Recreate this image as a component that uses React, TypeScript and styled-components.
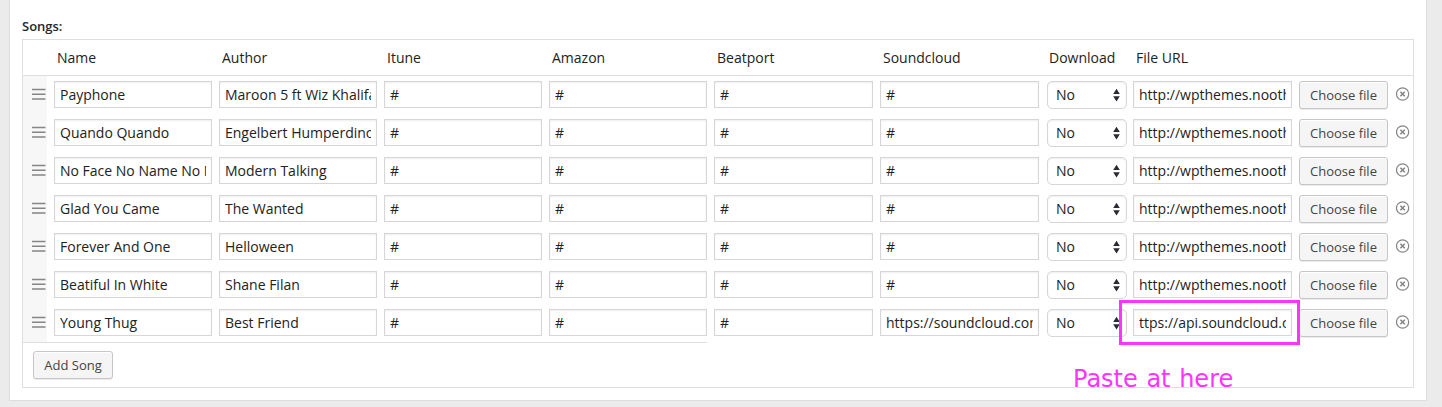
import React from 'react';
import styled, { createGlobalStyle } from 'styled-components';

const GlobalStyle = createGlobalStyle`
  * { box-sizing: border-box; }
  body {
    margin: 0;
    background: #ebebeb;
    color: #222;
    font: 14px/20px 'Open Sans', sans-serif;
    overflow: hidden;
  }
`;

const Panel = styled.main`
  position: relative;
  width: 1418px;
  height: 401px;
  margin-left: 9px;
  padding: 16px 12px 0;
  background: #fff;
  border: 1px solid #dedede;
  border-top: 0;
  box-shadow: 0 1px 1px rgba(0, 0, 0, 0.04);
`;

const Title = styled.h2`
  height: 23px;
  margin: 0;
  font-size: 13px;
  line-height: 20px;
  font-weight: 600;
  color: #23282d;
`;

const Table = styled.section`
  width: 1392px;
  height: 349px;
  border: 1px solid #dfdfdf;
`;

const columns = '31px 165px 165px 165px 165px 166px 167px 86px 166px 97px 14px';

const Header = styled.header`
  display: grid;
  grid-template-columns: ${columns};
  height: 36px;
  border-bottom: 1px solid #dfdfdf;
  line-height: 36px;
`;

const Heading = styled.div<{ $shift?: number }>`
  padding-left: ${p => p.$shift ?? 3}px;
  white-space: nowrap;
`;

const Row = styled.div`
  display: grid;
  grid-template-columns: ${columns};
  height: 38px;
`;

const Handle = styled.div`
  width: 24px;
  background: #f7f7f7;
  padding: 12px 0 0 9px;
  svg { display: block; }
`;

const Field = styled.div<{ $wide?: boolean }>`
  width: ${p => (p.$wide ? 159 : 158)}px;
  height: 27px;
  margin-top: 5px;
  padding: 0 5px;
  border: 1px solid #d6d6d6;
  box-shadow: inset 0 1px 2px rgba(0, 0, 0, 0.07);
  line-height: 26px;
`;

const Value = styled.span`
  display: block;
  overflow: hidden;
  white-space: nowrap;
`;

const Select = styled.div`
  display: flex;
  justify-content: space-between;
  width: 80px;
  height: 28px;
  margin: 5px 0 0;
  padding: 0 6px 0 8px;
  border: 1px solid #d6d6d6;
  border-radius: 5px;
  box-shadow: inset 0 1px 2px rgba(0, 0, 0, 0.07);
  line-height: 26px;
  svg { margin-top: 6px; }
`;

const Button = styled.button<{ $width: number }>`
  display: block;
  width: ${p => p.$width}px;
  height: 28px;
  margin: 0;
  padding: 0;
  border: 1px solid #c6c6c6;
  border-radius: 3px;
  background: #f5f5f5;
  box-shadow: inset 0 1px 0 #fff, 0 1px 0 rgba(0, 0, 0, 0.08);
  color: #444;
  font: 13px/26px 'Open Sans', sans-serif;
  white-space: nowrap;
`;

const ButtonCell = styled.div`
  padding-top: 5px;
`;

const Remove = styled.div`
  padding-top: 11px;
  svg { display: block; }
`;

const Footer = styled.footer`
  padding: 8px 0 0 10px;
`;

const Divider = styled.div`
  width: 684px;
  height: 1px;
  background: #dfdfdf;
`;

const Highlight = styled.div`
  position: absolute;
  left: 1109px;
  top: 300px;
  width: 181px;
  height: 45px;
  border: 3px solid #ff33ff;
`;

const Note = styled.div`
  position: absolute;
  left: 1063px;
  top: 365px;
  color: #ff33ff;
  font: 24px/28px 'DejaVu Sans', Verdana, sans-serif;
  word-spacing: 1px;
  white-space: nowrap;
`;

const HandleIcon = () => (
  <svg width="14" height="12" viewBox="0 0 14 12">
    <path d="M0 1.5h13.5M0 6.3h13.5M0 11.1h13.5" stroke="#858585" strokeWidth="1.5" fill="none" />
  </svg>
);

const ArrowsIcon = () => (
  <svg width="7" height="14" viewBox="0 0 7 14">
    <path d="M3.5 .8L6.8 6.1H.2zM3.5 13.6L6.8 8.3H.2z" fill="#2b2b33" />
  </svg>
);

const RemoveIcon = () => (
  <svg width="14" height="14" viewBox="0 0 14 14" fill="none" stroke="#858585">
    <circle cx="6.6" cy="7" r="6.1" strokeWidth="1.2" />
    <path d="M4.4 4.8l4.4 4.4M8.8 4.8L4.4 9.2" strokeWidth="1.6" />
  </svg>
);

const fileUrl = 'http://wpthemes.nooth';

const songs = [
  { name: 'Payphone', author: 'Maroon 5 ft Wiz Khalifa', cloud: '#', url: fileUrl },
  { name: 'Quando Quando', author: 'Engelbert Humperdinc', cloud: '#', url: fileUrl },
  { name: 'No Face No Name No N', author: 'Modern Talking', cloud: '#', url: fileUrl },
  { name: 'Glad You Came', author: 'The Wanted', cloud: '#', url: fileUrl },
  { name: 'Forever And One', author: 'Helloween', cloud: '#', url: fileUrl },
  { name: 'Beatiful In White', author: 'Shane Filan', cloud: '#', url: fileUrl },
  { name: 'Young Thug', author: 'Best Friend', cloud: 'https://soundcloud.com', url: 'ttps://api.soundcloud.c' },
];

const TextField = ({ value, wide }: { value: string; wide?: boolean }) => (
  <Field $wide={wide}><Value>{value}</Value></Field>
);

export default function App() {
  return (
    <>
      <GlobalStyle />
      <Panel>
        <Title>Songs:</Title>
        <Table>
          <Header>
            <Heading />
            <Heading>Name</Heading>
            <Heading>Author</Heading>
            <Heading>Itune</Heading>
            <Heading>Amazon</Heading>
            <Heading>Beatport</Heading>
            <Heading>Soundcloud</Heading>
            <Heading $shift={2}>Download</Heading>
            <Heading>File URL</Heading>
          </Header>
          {songs.map(song => (
            <Row key={song.name}>
              <Handle><HandleIcon /></Handle>
              <TextField value={song.name} />
              <TextField value={song.author} />
              <TextField value="#" />
              <TextField value="#" />
              <TextField value="#" wide />
              <TextField value={song.cloud} wide />
              <Select>No<ArrowsIcon /></Select>
              <TextField value={song.url} wide />
              <ButtonCell><Button $width={89}>Choose file</Button></ButtonCell>
              <Remove><RemoveIcon /></Remove>
            </Row>
          ))}
          <Divider />
          <Footer><Button $width={80}>Add Song</Button></Footer>
        </Table>
        <Highlight />
        <Note>Paste at here</Note>
      </Panel>
    </>
  );
}
